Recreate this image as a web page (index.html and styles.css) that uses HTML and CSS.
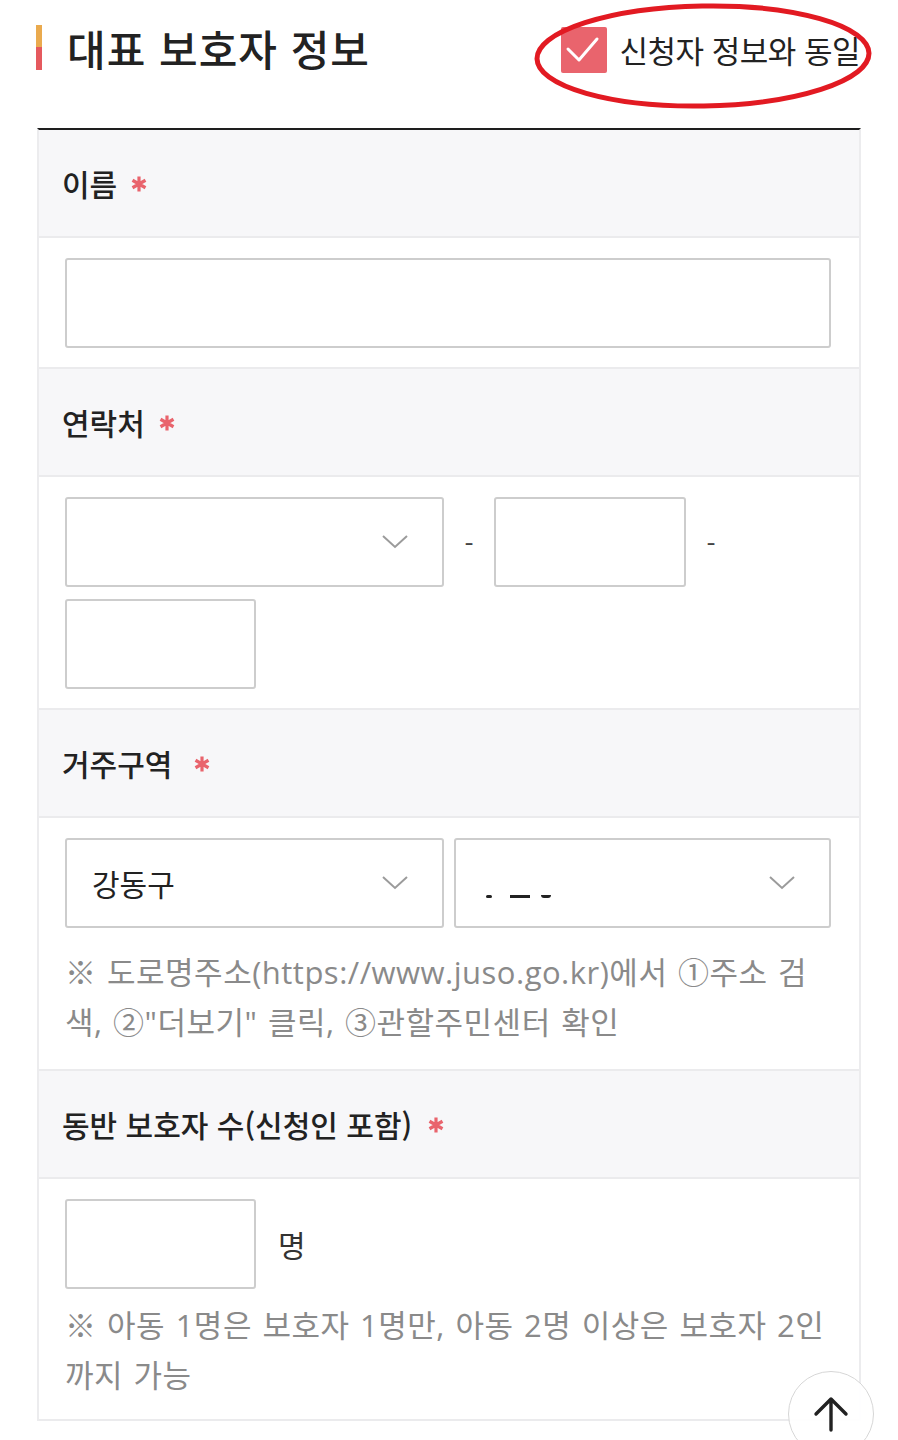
FILE: index.html
```html
<!DOCTYPE html>
<html lang="ko">
<head>
<meta charset="utf-8">
<title>대표 보호자 정보</title>
<link rel="stylesheet" href="styles.css">
</head>
<body>
<div class="wrap">
  <div class="head">
    <h2 class="title"><span class="bar"></span>대표 보호자 정보</h2>
    <label class="same">
      <span class="check"><svg width="46" height="46" viewBox="0 0 46 46"><path d="M7 22 L18 33 L36 12" fill="none" stroke="#fff" stroke-width="3" stroke-linecap="round" stroke-linejoin="round"/></svg></span>
      <span class="same-text">신청자 정보와 동일</span>
      <svg class="mark" width="344" height="110" viewBox="0 0 344 110"><ellipse cx="170" cy="54" rx="166" ry="50" fill="none" stroke="#e21a22" stroke-width="5" transform="rotate(-1 170 54)"/></svg>
    </label>
  </div>

  <div class="table">
    <div class="th">이름<svg class="req" width="18" height="18" viewBox="0 0 18 18"><path d="M9 1.5 V16.5 M2.5 5.25 L15.5 12.75 M2.5 12.75 L15.5 5.25" stroke="#e9646d" stroke-width="3.2" stroke-linecap="butt"/></svg></div>
    <div class="td">
      <input class="inp full" type="text">
    </div>

    <div class="th">연락처<svg class="req" width="18" height="18" viewBox="0 0 18 18"><path d="M9 1.5 V16.5 M2.5 5.25 L15.5 12.75 M2.5 12.75 L15.5 5.25" stroke="#e9646d" stroke-width="3.2" stroke-linecap="butt"/></svg></div>
    <div class="td">
      <div class="phone">
        <div class="select w379"><span></span><svg class="chev" width="26" height="14" viewBox="0 0 26 14"><path d="M1 1 L13 12 L25 1" fill="none" stroke="#9b9b9b" stroke-width="2"/></svg></div>
        <span class="dash">-</span>
        <input class="inp w192" type="text">
        <span class="dash">-</span>
        <input class="inp w191" type="text">
      </div>
    </div>

    <div class="th">거주구역<svg class="req wide" width="18" height="18" viewBox="0 0 18 18"><path d="M9 1.5 V16.5 M2.5 5.25 L15.5 12.75 M2.5 12.75 L15.5 5.25" stroke="#e9646d" stroke-width="3.2" stroke-linecap="butt"/></svg></div>
    <div class="td">
      <div class="region">
        <div class="select w379"><span class="val">강동구</span><svg class="chev" width="26" height="14" viewBox="0 0 26 14"><path d="M1 1 L13 12 L25 1" fill="none" stroke="#9b9b9b" stroke-width="2"/></svg></div>
        <div class="select w378"><span class="glitch"><i class="g1"></i><i class="g2"></i><i class="g3"></i></span><svg class="chev" width="26" height="14" viewBox="0 0 26 14"><path d="M1 1 L13 12 L25 1" fill="none" stroke="#9b9b9b" stroke-width="2"/></svg></div>
      </div>
      <p class="hint h1">※ 도로명주소(https://www.juso.go.kr)에서 ①주소 검색, ②"더보기" 클릭, ③관할주민센터 확인</p>
    </div>

    <div class="th">동반 보호자 수(신청인 포함)<svg class="req mid" width="18" height="18" viewBox="0 0 18 18"><path d="M9 1.5 V16.5 M2.5 5.25 L15.5 12.75 M2.5 12.75 L15.5 5.25" stroke="#e9646d" stroke-width="3.2" stroke-linecap="butt"/></svg></div>
    <div class="td">
      <div class="count">
        <input class="inp w191" type="text">
        <span class="unit">명</span>
      </div>
      <p class="hint h2">※ 아동 1명은 보호자 1명만, 아동 2명 이상은 보호자 2인까지 가능</p>
    </div>
  </div>
</div>

<button class="totop" type="button" aria-label="맨 위로">
  <svg width="40" height="40" viewBox="0 0 40 40"><path d="M20 36 V5 M5 20 L20 5 L35 20" fill="none" stroke="#222" stroke-width="3.4" stroke-linecap="round" stroke-linejoin="round"/></svg>
</button>
</body>
</html>
```

FILE: styles.css
```css
* { box-sizing: border-box; }

html, body {
  margin: 0;
  padding: 0;
  background: #fff;
}

body {
  font-family: "Noto Sans CJK KR", "Noto Sans", sans-serif;
  color: #222;
}

.wrap {
  padding: 0 37px 40px 37px;
}

.head {
  height: 128px;
  display: flex;
  justify-content: space-between;
  align-items: flex-start;
  padding-top: 25px;
}

.title {
  margin: 0;
  display: flex;
  align-items: center;
  gap: 25px;
  font-size: 42px;
  line-height: 45px;
  font-weight: 500;
  color: #222;
  letter-spacing: 1px;
}

.bar {
  display: block;
  width: 6px;
  height: 45px;
  margin-left: -1px;
  background: linear-gradient(#eaaa4e 0 48%, #e5595e 48% 100%);
}

.same {
  position: relative;
  display: flex;
  align-items: center;
  gap: 12px;
  margin-top: 2px;
  margin-right: 1px;
}

.check {
  display: block;
  width: 46px;
  height: 46px;
  background: #e9646d;
  border-radius: 2px;
}

.check svg { display: block; }

.same-text {
  font-size: 31px;
  line-height: 46px;
  color: #222;
  letter-spacing: -0.5px;
}

.mark {
  position: absolute;
  left: -28px;
  top: -25px;
  pointer-events: none;
}

.table {
  border-top: 2px solid #1e1e1e;
  border-left: 2px solid #ececee;
  border-right: 2px solid #ececee;
}

.th {
  height: 108px;
  display: flex;
  align-items: center;
  padding-left: 23px;
  background: #f7f7f9;
  border-bottom: 2px solid #ebebed;
  font-size: 30px;
  font-weight: 500;
  color: #222;
}

.req {
  display: block;
  margin-left: 13px;
  margin-top: 1px;
}

.req.wide { margin-left: 21px; }
.req.mid { margin-left: 15px; }

.td {
  padding: 20px 28px 19px 26px;
  border-bottom: 2px solid #ebebed;
  background: #fff;
}

.inp {
  display: block;
  height: 90px;
  border: 2px solid #cdcdcd;
  border-radius: 3px;
  background: #fff;
  margin: 0;
  padding: 0 20px;
  font: inherit;
  outline: none;
}

.full { width: 100%; }
.w192 { width: 192px; }
.w191 { width: 191px; }
.w379 { width: 379px; }
.w378 { width: 378px; }

.phone {
  display: flex;
  flex-wrap: wrap;
  row-gap: 12px;
  align-items: center;
}

.dash {
  width: 50px;
  text-align: center;
  font-size: 26px;
  color: #444;
}

.select {
  height: 90px;
  border: 2px solid #cdcdcd;
  border-radius: 3px;
  display: flex;
  align-items: center;
  justify-content: space-between;
  padding: 0 34px 0 25px;
  background: #fff;
}

.chev { display: block; }

.val {
  font-size: 30px;
  color: #222;
}

.glitch {
  display: flex;
  align-items: flex-end;
  height: 90px;
  padding-bottom: 30px;
  padding-left: 5px;
}

.glitch i {
  display: block;
  background: #222;
  height: 3px;
}

.glitch .g1 { width: 6px; border-radius: 2px; margin-right: 18px; }
.glitch .g2 { width: 20px; margin-right: 11px; }
.glitch .g3 { width: 10px; border-radius: 0 0 4px 4px; }

.region {
  display: flex;
  gap: 10px;
}

.hint {
  margin: 0;
  font-family: "Open Sans", "Noto Sans CJK KR", sans-serif;
  font-size: 31px;
  line-height: 50px;
  color: #8a8a8a;
  letter-spacing: 0.5px;
  word-spacing: 2px;
}

.h1 { margin-top: 19px; margin-bottom: 3px; }
.h2 { margin-top: 11px; }

.count {
  display: flex;
  align-items: center;
}

.unit {
  margin-left: 22px;
  font-size: 30px;
  color: #333;
}

.totop {
  position: fixed;
  right: 24px;
  bottom: -17px;
  width: 86px;
  height: 86px;
  border-radius: 50%;
  border: 1.5px solid #d6d6d6;
  background: rgba(255, 255, 255, 0.95);
  display: flex;
  align-items: flex-start;
  justify-content: center;
  padding: 22px 0 0 0;
  margin: 0;
}

.totop svg { display: block; }
```
